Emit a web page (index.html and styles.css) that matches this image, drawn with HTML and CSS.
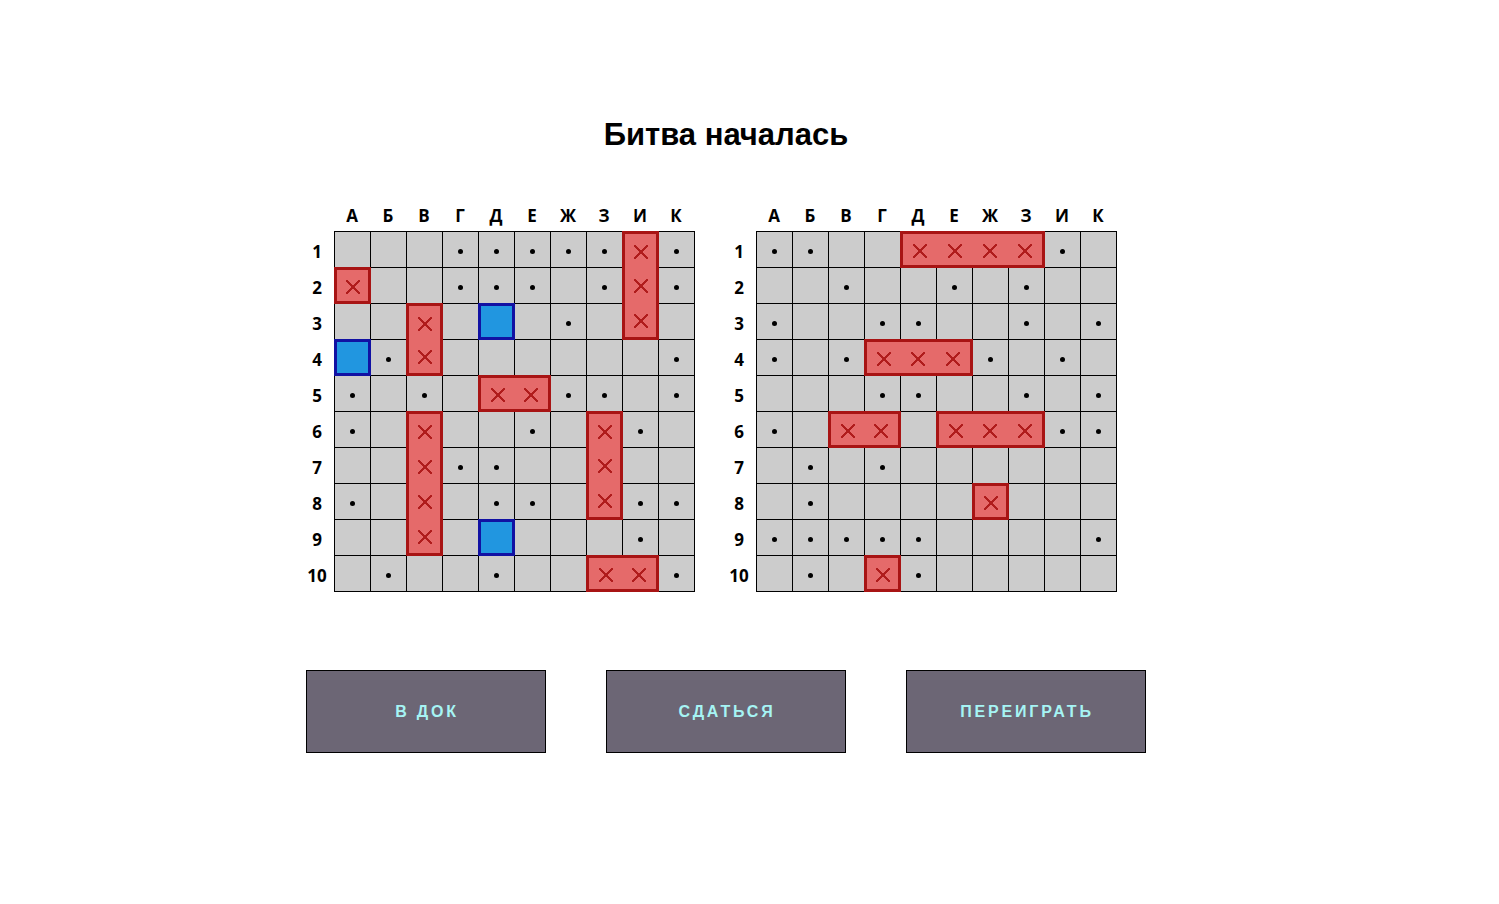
FILE: index.html
```html
<!DOCTYPE html>
<html lang="ru">
<head>
<meta charset="utf-8">
<title>Морской бой</title>
<link rel="stylesheet" href="styles.css">
</head>
<body>
<main class="game">
  <h1 class="title">Битва началась</h1>
  <div class="boards">
    <section class="board">
      <div class="cols"><span>А</span><span>Б</span><span>В</span><span>Г</span><span>Д</span><span>Е</span><span>Ж</span><span>З</span><span>И</span><span>К</span></div>
      <div class="body">
        <div class="rows"><span>1</span><span>2</span><span>3</span><span>4</span><span>5</span><span>6</span><span>7</span><span>8</span><span>9</span><span>10</span></div>
        <div class="grid">
          <div class="ship v" style="grid-area: 1 / 9 / span 3 / span 1"><i class="x"></i><i class="x"></i><i class="x"></i></div>
          <div class="ship" style="grid-area: 2 / 1 / span 1 / span 1"><i class="x"></i></div>
          <div class="ship v" style="grid-area: 3 / 3 / span 2 / span 1"><i class="x"></i><i class="x"></i></div>
          <div class="ship" style="grid-area: 5 / 5 / span 1 / span 2"><i class="x"></i><i class="x"></i></div>
          <div class="ship v" style="grid-area: 6 / 3 / span 4 / span 1"><i class="x"></i><i class="x"></i><i class="x"></i><i class="x"></i></div>
          <div class="ship v" style="grid-area: 6 / 8 / span 3 / span 1"><i class="x"></i><i class="x"></i><i class="x"></i></div>
          <div class="ship" style="grid-area: 10 / 8 / span 1 / span 2"><i class="x"></i><i class="x"></i></div>
          <!-- row 1 -->
          <span class="c"></span><span class="c"></span><span class="c"></span><span class="c o"></span><span class="c o"></span><span class="c o"></span><span class="c o"></span><span class="c o"></span><span class="c o"></span>
          <!-- row 2 -->
          <span class="c"></span><span class="c"></span><span class="c o"></span><span class="c o"></span><span class="c o"></span><span class="c"></span><span class="c o"></span><span class="c o"></span>
          <!-- row 3 -->
          <span class="c"></span><span class="c"></span><span class="c"></span><span class="c b"></span><span class="c"></span><span class="c o"></span><span class="c"></span><span class="c"></span>
          <!-- row 4 -->
          <span class="c b"></span><span class="c o"></span><span class="c"></span><span class="c"></span><span class="c"></span><span class="c"></span><span class="c"></span><span class="c"></span><span class="c o"></span>
          <!-- row 5 -->
          <span class="c o"></span><span class="c"></span><span class="c o"></span><span class="c"></span><span class="c o"></span><span class="c o"></span><span class="c"></span><span class="c o"></span>
          <!-- row 6 -->
          <span class="c o"></span><span class="c"></span><span class="c"></span><span class="c"></span><span class="c o"></span><span class="c"></span><span class="c o"></span><span class="c"></span>
          <!-- row 7 -->
          <span class="c"></span><span class="c"></span><span class="c o"></span><span class="c o"></span><span class="c"></span><span class="c"></span><span class="c"></span><span class="c"></span>
          <!-- row 8 -->
          <span class="c o"></span><span class="c"></span><span class="c"></span><span class="c o"></span><span class="c o"></span><span class="c"></span><span class="c o"></span><span class="c o"></span>
          <!-- row 9 -->
          <span class="c"></span><span class="c"></span><span class="c"></span><span class="c b"></span><span class="c"></span><span class="c"></span><span class="c"></span><span class="c o"></span><span class="c"></span>
          <!-- row 10 -->
          <span class="c"></span><span class="c o"></span><span class="c"></span><span class="c"></span><span class="c o"></span><span class="c"></span><span class="c"></span><span class="c o"></span>
        </div>
      </div>
    </section>
    <section class="board">
      <div class="cols"><span>А</span><span>Б</span><span>В</span><span>Г</span><span>Д</span><span>Е</span><span>Ж</span><span>З</span><span>И</span><span>К</span></div>
      <div class="body">
        <div class="rows"><span>1</span><span>2</span><span>3</span><span>4</span><span>5</span><span>6</span><span>7</span><span>8</span><span>9</span><span>10</span></div>
        <div class="grid">
          <div class="ship" style="grid-area: 1 / 5 / span 1 / span 4"><i class="x"></i><i class="x"></i><i class="x"></i><i class="x"></i></div>
          <div class="ship" style="grid-area: 4 / 4 / span 1 / span 3"><i class="x"></i><i class="x"></i><i class="x"></i></div>
          <div class="ship" style="grid-area: 6 / 3 / span 1 / span 2"><i class="x"></i><i class="x"></i></div>
          <div class="ship" style="grid-area: 6 / 6 / span 1 / span 3"><i class="x"></i><i class="x"></i><i class="x"></i></div>
          <div class="ship" style="grid-area: 8 / 7 / span 1 / span 1"><i class="x"></i></div>
          <div class="ship" style="grid-area: 10 / 4 / span 1 / span 1"><i class="x"></i></div>
          <!-- row 1 -->
          <span class="c o"></span><span class="c o"></span><span class="c"></span><span class="c"></span><span class="c o"></span><span class="c"></span>
          <!-- row 2 -->
          <span class="c"></span><span class="c"></span><span class="c o"></span><span class="c"></span><span class="c"></span><span class="c o"></span><span class="c"></span><span class="c o"></span><span class="c"></span><span class="c"></span>
          <!-- row 3 -->
          <span class="c o"></span><span class="c"></span><span class="c"></span><span class="c o"></span><span class="c o"></span><span class="c"></span><span class="c"></span><span class="c o"></span><span class="c"></span><span class="c o"></span>
          <!-- row 4 -->
          <span class="c o"></span><span class="c"></span><span class="c o"></span><span class="c o"></span><span class="c"></span><span class="c o"></span><span class="c"></span>
          <!-- row 5 -->
          <span class="c"></span><span class="c"></span><span class="c"></span><span class="c o"></span><span class="c o"></span><span class="c"></span><span class="c"></span><span class="c o"></span><span class="c"></span><span class="c o"></span>
          <!-- row 6 -->
          <span class="c o"></span><span class="c"></span><span class="c"></span><span class="c o"></span><span class="c o"></span>
          <!-- row 7 -->
          <span class="c"></span><span class="c o"></span><span class="c"></span><span class="c o"></span><span class="c"></span><span class="c"></span><span class="c"></span><span class="c"></span><span class="c"></span><span class="c"></span>
          <!-- row 8 -->
          <span class="c"></span><span class="c o"></span><span class="c"></span><span class="c"></span><span class="c"></span><span class="c"></span><span class="c"></span><span class="c"></span><span class="c"></span>
          <!-- row 9 -->
          <span class="c o"></span><span class="c o"></span><span class="c o"></span><span class="c o"></span><span class="c o"></span><span class="c"></span><span class="c"></span><span class="c"></span><span class="c"></span><span class="c o"></span>
          <!-- row 10 -->
          <span class="c"></span><span class="c o"></span><span class="c"></span><span class="c o"></span><span class="c"></span><span class="c"></span><span class="c"></span><span class="c"></span><span class="c"></span>
        </div>
      </div>
    </section>
  </div>
  <div class="actions">
    <button class="btn" type="button">В ДОК</button>
    <button class="btn" type="button">СДАТЬСЯ</button>
    <button class="btn" type="button">ПЕРЕИГРАТЬ</button>
  </div>
</main>
</body>
</html>
```

FILE: styles.css
```css
html, body {
  margin: 0;
  padding: 0;
  background: #ffffff;
}

.game {
  width: 840px;
  margin-left: 306px;
  padding-top: 119px;
}

.title {
  margin: 0;
  text-align: center;
  font-family: "Liberation Sans", Arial, sans-serif;
  font-weight: bold;
  font-size: 31px;
  line-height: 32px;
  color: #000;
}

.boards {
  display: flex;
  gap: 33px;
  margin-top: 50px;
  font-family: "Open Sans", "Noto Sans", sans-serif;
  font-weight: 700;
  font-size: 17px;
  color: #000;
}

.board {
  display: flex;
  flex-direction: column;
}

.cols {
  display: flex;
  padding-left: 28px;
  height: 30px;
}

.cols span {
  width: 36px;
  text-align: center;
  line-height: 29px;
}

.body {
  display: flex;
}

.rows {
  display: flex;
  flex-direction: column;
  width: 28px;
  padding-top: 1px;
}

.rows span {
  height: 36px;
  width: 22px;
  text-align: center;
  line-height: 39px;
}

.grid {
  display: grid;
  grid-template-columns: repeat(10, 35px);
  grid-template-rows: repeat(10, 35px);
  gap: 1px;
  padding: 1px;
  background: #000;
}

.c {
  background: #cccccc;
  display: flex;
  align-items: center;
  justify-content: center;
}

.c.o::after {
  content: "";
  width: 5px;
  height: 5px;
  border-radius: 50%;
  background: #000;
  margin-top: 3px;
}

.c.b {
  margin: -1px;
  border: 3px solid #1111a3;
  background: #2196e0;
  z-index: 1;
}

.ship {
  margin: -1px;
  border: 3px solid #a81414;
  background: #e56a6a;
  display: flex;
  z-index: 1;
}

.ship.v {
  flex-direction: column;
}

.x {
  flex: 1;
  display: flex;
  align-items: center;
  justify-content: center;
  padding-top: 2px;
}

.x::before {
  content: "";
  width: 14px;
  height: 14px;
  background:
    linear-gradient(45deg, transparent calc(50% - 1px), #b01c1c calc(50% - 1px), #b01c1c calc(50% + 1px), transparent calc(50% + 1px)),
    linear-gradient(-45deg, transparent calc(50% - 1px), #b01c1c calc(50% - 1px), #b01c1c calc(50% + 1px), transparent calc(50% + 1px));
}

.actions {
  display: flex;
  gap: 60px;
  margin-top: 78px;
}

.btn {
  width: 240px;
  height: 83px;
  background: #6c6675;
  border: 1px solid #000;
  border-radius: 0;
  padding: 0 0 0 2px;
  color: #a6f4f4;
  font-family: "Liberation Sans", Arial, sans-serif;
  font-weight: bold;
  font-size: 16px;
  letter-spacing: 2.8px;
  cursor: pointer;
}
```
